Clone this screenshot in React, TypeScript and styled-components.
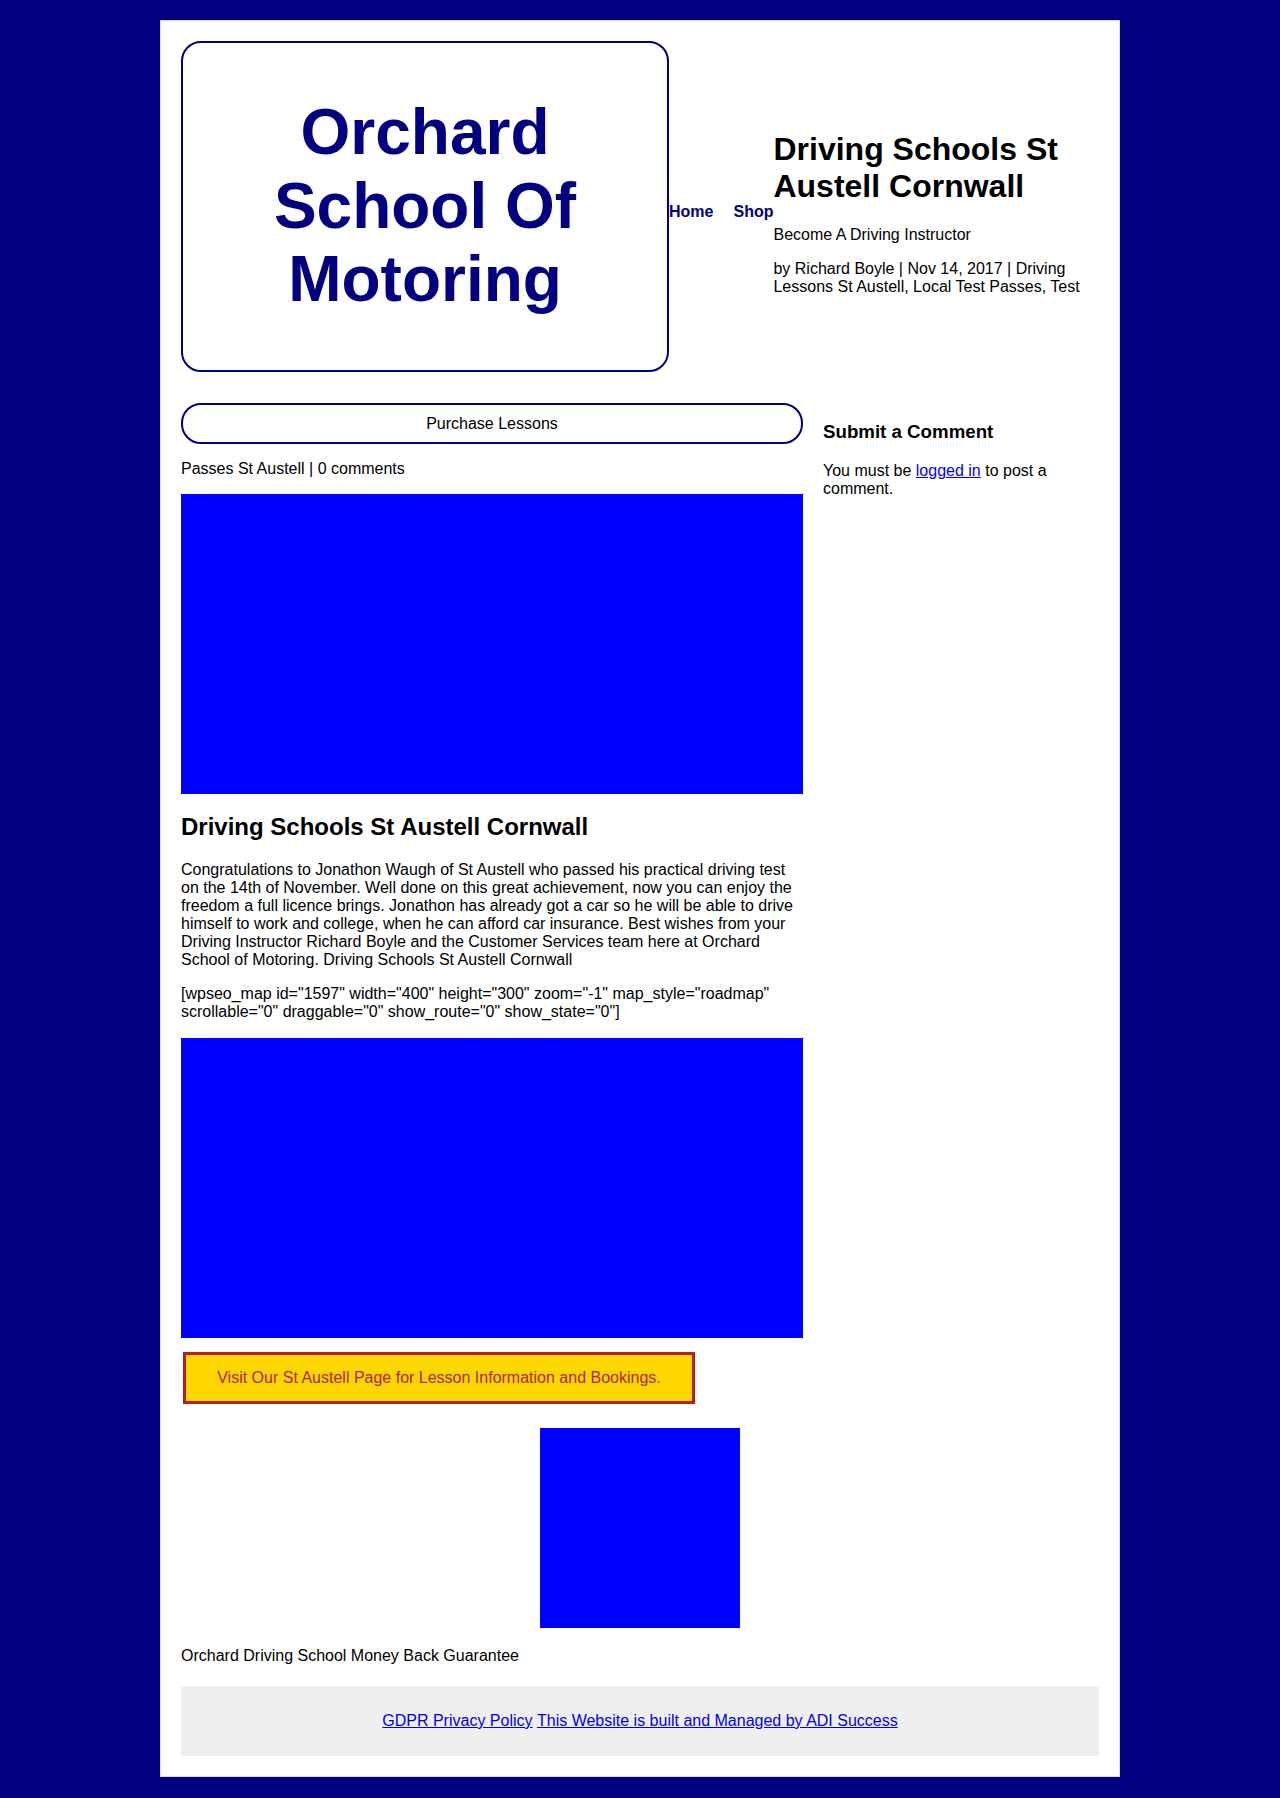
import React from "react";
import styled, { createGlobalStyle } from "styled-components";

const GlobalStyle = createGlobalStyle`
  html, body {
    margin: 0;
    padding: 0;
    background: #000080;
  }
  body {
    font-family: "Liberation Sans", Arial, sans-serif;
    font-size: 16px;
    line-height: 18px;
    color: #000;
  }
  * { box-sizing: border-box; }
`;

const Page = styled.div`
  padding: 20px 0 20px;
`;

const Container = styled.div`
  width: 960px;
  margin: 0 auto;
  background: #fff;
  border: 1px solid #d8d8e8;
  padding: 20px;
`;

const Header = styled.header`
  display: flex;
  align-items: center;
`;

const LogoBox = styled.div`
  width: 488px;
  height: 331px;
  flex: none;
  border: 2px solid #000080;
  border-radius: 20px;
  display: flex;
  align-items: center;
  justify-content: center;
  text-align: center;
`;

const LogoText = styled.div`
  font-size: 64px;
  line-height: 73.5px;
  font-weight: 700;
  color: #000080;
  padding: 0 40px;
`;

const Nav = styled.nav`
  display: flex;
  gap: 20px;
  padding-top: 11px;
  flex: none;
`;

const NavLink = styled.a`
  font-weight: 700;
  color: #000080;
  text-decoration: none;
  font-size: 16px;
`;

const HeaderInfo = styled.div`
  flex: 1;
  padding-top: 14px;
`;

const Title = styled.h1`
  font-size: 32px;
  line-height: 36.8px;
  font-weight: 700;
  margin: 0 0 21.4px;
`;

const Text = styled.p<{ $mb?: number }>`
  margin: 0 0 ${(p) => (p.$mb ?? 16)}px;
`;

const Body = styled.div`
  display: flex;
  gap: 20px;
  margin-top: 31px;
`;

const Main = styled.main`
  width: 622px;
  flex: none;
`;

const Sidebar = styled.aside`
  flex: 1;
  padding-top: 18px;
`;

const PillButton = styled.a`
  display: flex;
  align-items: center;
  justify-content: center;
  height: 41px;
  border: 2px solid #000080;
  border-radius: 20px;
  color: #000;
  text-decoration: none;
  margin-bottom: 16px;
`;

const Picture = styled.div<{ $w?: number; $h: number }>`
  width: ${(p) => (p.$w ? `${p.$w}px` : "100%")};
  height: ${(p) => p.$h}px;
  background: #0000ff;
`;

const PostTitle = styled.h2`
  font-size: 24px;
  line-height: 27.6px;
  font-weight: 700;
  margin: 19px 0 20px;
`;

const SideTitle = styled.h3`
  font-size: 18.7px;
  line-height: 21.5px;
  font-weight: 700;
  margin: 0 0 19px;
`;

const InlineLink = styled.a`
  color: #0000ee;
  text-decoration: underline;
`;

const CtaBox = styled.a`
  display: flex;
  align-items: center;
  justify-content: center;
  width: 512px;
  height: 52px;
  margin: 14px 0 0 2px;
  background: #ffd700;
  border: 3px solid #b22222;
  color: #b22222;
  text-decoration: none;
`;

const Centered = styled.div`
  display: flex;
  justify-content: center;
  margin-top: 24px;
`;

const Guarantee = styled.p`
  margin: 19px 0 21px;
`;

const Footer = styled.footer`
  background: #efefef;
  height: 70px;
  display: flex;
  align-items: center;
  justify-content: center;
`;

export default function App() {
  return (
    <>
      <GlobalStyle />
      <Page>
        <Container>
          <Header>
            <LogoBox>
              <LogoText>Orchard School Of Motoring</LogoText>
            </LogoBox>
            <Nav>
              <NavLink href="#">Home</NavLink>
              <NavLink href="#">Shop</NavLink>
            </Nav>
            <HeaderInfo>
              <Title>Driving Schools St Austell Cornwall</Title>
              <Text>Become A Driving Instructor</Text>
              <Text $mb={0}>
                by Richard Boyle | Nov 14, 2017 | Driving Lessons St Austell, Local Test Passes, Test
              </Text>
            </HeaderInfo>
          </Header>
          <Body>
            <Main>
              <PillButton href="#">Purchase Lessons</PillButton>
              <Text>Passes St Austell | 0 comments</Text>
              <Picture $h={300} />
              <PostTitle>Driving Schools St Austell Cornwall</PostTitle>
              <Text>
                Congratulations to Jonathon Waugh of St Austell who passed his practical driving test
                on the 14th of November. Well done on this great achievement, now you can enjoy the
                freedom a full licence brings. Jonathon has already got a car so he will be able to drive
                himself to work and college, when he can afford car insurance. Best wishes from your
                Driving Instructor Richard Boyle and the Customer Services team here at Orchard
                School of Motoring. Driving Schools St Austell Cornwall
              </Text>
              <Text $mb={17}>
                [wpseo_map id="1597" width="400" height="300" zoom="-1" map_style="roadmap"
                scrollable="0" draggable="0" show_route="0" show_state="0"]
              </Text>
              <Picture $h={300} />
              <CtaBox href="#">Visit Our St Austell Page for Lesson Information and Bookings.</CtaBox>
            </Main>
            <Sidebar>
              <SideTitle>Submit a Comment</SideTitle>
              <Text>
                You must be <InlineLink href="#">logged in</InlineLink> to post a comment.
              </Text>
            </Sidebar>
          </Body>
          <Centered>
            <Picture $w={200} $h={200} />
          </Centered>
          <Guarantee>Orchard Driving School Money Back Guarantee</Guarantee>
          <Footer>
            <InlineLink href="#">GDPR Privacy Policy</InlineLink>&nbsp;
            <InlineLink href="#">This Website is built and Managed by ADI Success</InlineLink>
          </Footer>
        </Container>
      </Page>
    </>
  );
}
